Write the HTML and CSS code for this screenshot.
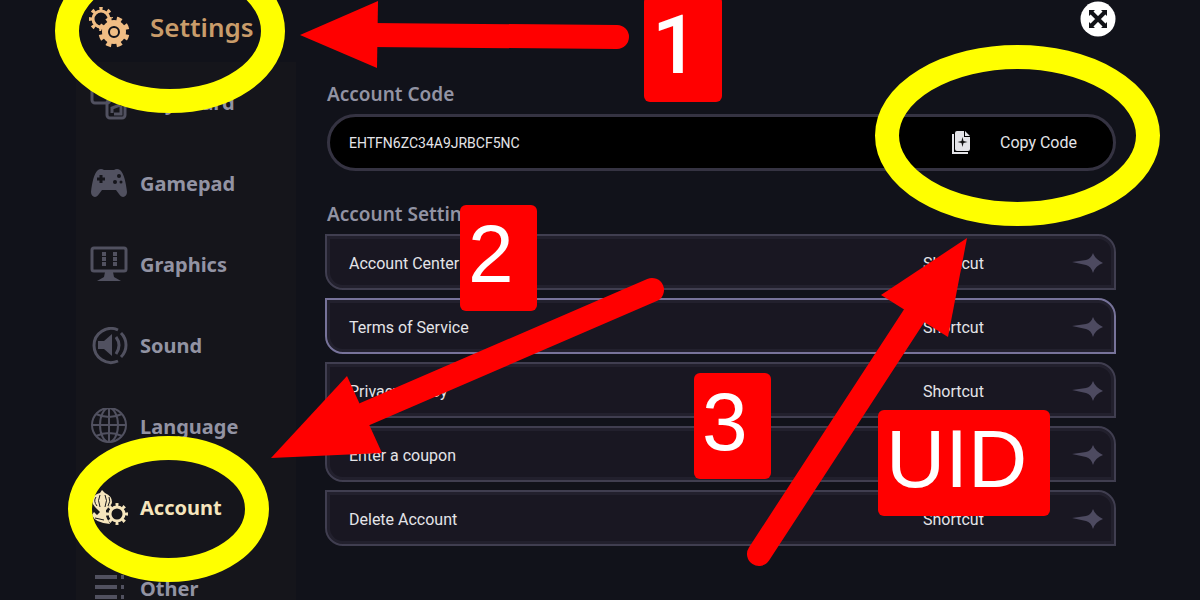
FILE: index.html
```
<!DOCTYPE html>
<html lang="en">
<head>
  <meta charset="UTF-8" />
  <meta name="viewport" content="width=device-width, initial-scale=1" />
  <title>Settings - Account</title>
  <link rel="stylesheet" href="styles.css">
</head>
<body>
  <div class="screen">
    <aside class="sidebar">
      <h1 class="title">
        <svg class="title-icon" viewBox="0 0 42 42">
          <mask id="back-gear"><path fill="#fff" d="M0 0h30v10L14 16l-1 12H0z" /></mask>
          <g fill="none" stroke="currentColor">
            <g mask="url(#back-gear)">
              <circle cx="13" cy="13" r="8" stroke-width="3" />
              <circle cx="13" cy="13" r="10" stroke-width="5" pathLength="32" stroke-dasharray="1.600 2.400" stroke-dashoffset="0.800" />
            </g>
            <circle cx="26" cy="26" r="9" stroke-width="6" />
            <circle cx="26" cy="26" r="13" stroke-width="5" pathLength="32" stroke-dasharray="2 2" stroke-dashoffset="1" transform="rotate(22.500 26 26)" />
          </g>
          <circle cx="26" cy="26" r="4" fill="currentColor" />
        </svg>
        Settings
      </h1>
      <nav class="menu">
        <a class="menu-item" href="#keyboard">
          <svg class="menu-icon" viewBox="0 0 38 38" fill="none" stroke="currentColor" stroke-width="3">
            <rect x="2" y="1" width="18" height="18" rx="3" />
            <rect x="17" y="16" width="18" height="18" rx="3" />
            <path d="M22 29V24l8-3M31 22v8h-7" />
          </svg>
          Keyboard
        </a>
        <a class="menu-item" href="#gamepad">
          <svg class="menu-icon" viewBox="0 0 38 38">
            <path fill="currentColor" d="M8 5q3-2 6 0h10q3-2 6 0c4 3 6 13 7 22 0 5-5 7-8 2l-3-4H12l-3 4c-3 5-8 3-8-2C2 18 4 8 8 5z" />
            <path stroke="#15151b" stroke-width="3" d="M7 14h8M11 10v8" />
            <g fill="#15151b"><circle cx="29" cy="11" r="2" /><circle cx="25" cy="17" r="2" /><circle cx="31" cy="17" r="1.500" /></g>
          </svg>
          Gamepad
        </a>
        <a class="menu-item" href="#graphics">
          <svg class="menu-icon" viewBox="0 0 38 38">
            <rect x="2" y="2" width="34" height="23" rx="2" fill="none" stroke="currentColor" stroke-width="3" />
            <path fill="currentColor" d="M15 26h8l1 5 7 4H7l7-4z" />
            <path stroke="currentColor" stroke-width="4" stroke-dasharray="4 1" d="M14 6v14M25 6v14" />
          </svg>
          Graphics
        </a>
        <a class="menu-item" href="#sound">
          <svg class="menu-icon" viewBox="0 0 38 38" fill="none" stroke="currentColor" stroke-width="3">
            <path d="M28 3a17 17 0 1 0 0 31M31 6q5 5 5 12t-5 12M26 10q6 8 0 17" />
            <path fill="currentColor" stroke="none" d="M8 14h6l8-7v22l-8-7H8z" />
          </svg>
          Sound
        </a>
        <a class="menu-item" href="#language">
          <svg class="menu-icon" viewBox="0 0 38 38" fill="none" stroke="currentColor" stroke-width="2">
            <circle cx="19" cy="17" r="17" />
            <ellipse cx="19" cy="17" rx="9" ry="17" />
            <path d="M19 0v34M2 17h34M6 6q13 6 26 0M6 28q13-6 26 0" />
          </svg>
          Language
        </a>
        <a class="menu-item active" href="#account" aria-current="page">
          <svg class="menu-icon" viewBox="0 0 38 38">
            <path fill="currentColor" d="M12 1l3 3q7 3 7 9 0 3-3 6l-3 2v5l4 9Q5 34 2 26l2-3 3 3 3-3-5-5q-4-4-2-9 2-4 7-5z" />
            <path fill="none" stroke="#15151b" d="M10 6q-3 5 0 12M15 6q3 5 0 12M6 8q-3 4 1 9M19 8q2 4-1 9M5 29l9 2" />
            <circle cx="27" cy="25" r="11" fill="#15151b" />
            <g fill="none" stroke="currentColor">
              <circle cx="27" cy="25" r="7" stroke-width="3" />
              <circle cx="27" cy="25" r="9" stroke-width="4" pathLength="32" stroke-dasharray="1.600 2.400" stroke-dashoffset="0.800" />
            </g>
          </svg>
          Account
        </a>
        <a class="menu-item" href="#other">
          <svg class="menu-icon" viewBox="0 0 38 38" stroke="currentColor" stroke-width="4">
            <path d="M5 7h22M31 7h3M5 17h22M31 17h3M5 27h22M31 27h3" />
          </svg>
          Other
        </a>
      </nav>
    </aside>

    <main class="content">
      <div class="top">
        <button class="close" aria-label="Close">
          <svg viewBox="0 0 36 36">
            <circle cx="18" cy="18" r="17.500" fill="#fff" />
            <path stroke="#111217" stroke-width="4" d="M11 11l14 14M25 11L11 25" />
            <path fill="#111217" d="M9 9h6l-6 6zM27 9h-6l6 6zM9 27h6l-6-6zM27 27h-6l6-6z" />
          </svg>
        </button>
      </div>

      <h2><label for="account-code">Account Code</label></h2>
      <div class="code-box">
        <input id="account-code" type="text" value="EHTFN6ZC34A9JRBCF5NC" readonly>
        <button class="copy">
          <svg class="copy-icon" viewBox="0 0 18 24">
            <path fill="none" stroke="currentColor" stroke-width="2" d="M1 3v19h15" />
            <path fill="currentColor" d="M5 0h7v6h6v12q0 2-2 2H5q-2 0-2-2V2q0-2 2-2zM13 0l5 5h-5z" />
            <path fill="#111" d="M10.500 6l1 4 4 1-4 1-1 4-1-4-4-1 4-1z" />
          </svg>
          Copy Code
        </button>
      </div>

      <h2>Account Settings</h2>
      <div class="rows">
        <a class="row" href="#center"><span>Account Center</span><span>Shortcut</span><svg class="star" viewBox="0 0 32 20"><use href="#spark" /></svg></a>
        <a class="row selected" href="#terms"><span>Terms of Service</span><span>Shortcut</span><svg class="star" viewBox="0 0 32 20"><use href="#spark" /></svg></a>
        <a class="row" href="#privacy"><span>Privacy Policy</span><span>Shortcut</span><svg class="star" viewBox="0 0 32 20"><use href="#spark" /></svg></a>
        <a class="row" href="#coupon"><span>Enter a coupon</span><span>Shortcut</span><svg class="star" viewBox="0 0 32 20"><use href="#spark" /></svg></a>
        <a class="row" href="#delete"><span>Delete Account</span><span>Shortcut</span><svg class="star" viewBox="0 0 32 20"><use href="#spark" /></svg></a>
      </div>
    </main>

    <!-- guide marks on top of the settings screen -->
    <svg class="marks" viewBox="0 0 1200 600">
      <defs><path id="spark" d="M0 9l14-2q5-1 7-7 2 6 10 10-8 3-10 10-2-7-7-8z" /></defs>
      <g class="ring">
        <ellipse cx="170" cy="31" rx="103" ry="70" />
        <ellipse cx="168.500" cy="509" rx="88.500" ry="61" />
        <ellipse cx="1017.500" cy="135.500" rx="130.500" ry="78.500" />
      </g>
      <g class="arrow">
        <path d="M370 35L617 37" /><path class="head" d="M300 35L378 1 377 68z" />
        <path d="M365 414L652 290" /><path class="head" d="M271 458L347 376 382 453z" />
        <path d="M914 316L759 554" /><path class="head" d="M967 238L881 295 948 337z" />
      </g>
    </svg>
    <span class="tag tag-1">1</span>
    <span class="tag tag-2">2</span>
    <span class="tag tag-3">3</span>
    <span class="tag tag-uid">UID</span>
  </div>
</body>
</html>
```
FILE: styles.css
```
* { box-sizing: border-box; }
body {
  margin: 0;
  background: #11121a;
  color: #e4e4e8;
  font-family: "Roboto", sans-serif;
  font-size: 16px;
}
a { color: inherit; text-decoration: none; }
button {
  padding: 0;
  border: 0;
  background: none;
  color: inherit;
  font: inherit;
  cursor: pointer;
}
.screen {
  position: relative;
  display: flex;
  height: 100vh;
  padding: 0 84px 0 76px;
  overflow: hidden;
}

/* left menu */
.sidebar {
  flex: 0 0 220px;
  background: #15151b;
  font-family: "Noto Sans", sans-serif;
}
.title {
  display: flex;
  align-items: center;
  gap: 20px;
  height: 62px;
  margin: 0;
  padding: 0 0 8px 12px;
  background: #11121a;
  color: #c99c6a;
  font-size: 26px;
  font-weight: 600;
}
.title-icon { width: 42px; height: 42px; color: #f0bd84; }
.menu-item {
  display: flex;
  align-items: center;
  gap: 12px;
  height: 81px;
  padding-left: 14px;
  color: #9293a3;
  font-size: 20px;
  font-weight: 700;
}
.menu-icon { width: 38px; height: 38px; color: #515160; }
.menu-item.active, .active .menu-icon { color: #f5e5bd; }

/* account page */
.content { flex: 1; padding-left: 29px; }
.top { display: flex; justify-content: flex-end; height: 80px; }
.close { width: 36px; height: 36px; margin-top: 1px; }
.close svg { display: block; }
h2 {
  margin: 0 0 6px 2px;
  color: #9293a3;
  font-family: "Noto Sans", sans-serif;
  font-size: 19px;
  font-weight: 600;
  line-height: 28px;
}
.code-box {
  display: flex;
  align-items: center;
  height: 57px;
  margin: 0 0 29px 2px;
  padding: 0 36px 0 19px;
  border: 3px solid #353342;
  border-radius: 30px;
  background: #000;
}
.code-box input {
  flex: 1;
  min-width: 0;
  padding: 0;
  border: 0;
  outline: 0;
  background: none;
  color: #e4e4e8;
  font-family: inherit;
  font-size: 14px;
}
.copy { display: flex; align-items: center; gap: 30px; }
.copy-icon { width: 18px; height: 24px; }
.rows { display: grid; gap: 8px; }
.row {
  display: grid;
  grid-template-columns: 1fr 149px 32px;
  align-items: center;
  height: 56px;
  padding: 2px 10px 0 22px;
  border: 2px solid #403e50;
  border-radius: 0 18px 0 18px;
  background: #191722;
  box-shadow: inset 0 0 0 3px #22202d;
}
.row.selected { border-color: #77739a; }
.star { width: 32px; height: 20px; fill: #4d4a60; }

/* guide marks */
.marks {
  position: absolute;
  top: 0;
  left: 0;
  width: 1200px;
  height: 600px;
  pointer-events: none;
}
.ring { fill: none; stroke: #ff0; stroke-width: 24; }
.arrow { stroke: #f00; stroke-width: 24; stroke-linecap: round; }
.arrow .head { fill: #f00; stroke: none; }
.tag {
  position: absolute;
  padding: 3px 23px 11px 8px;
  border-radius: 6px;
  background: #f00;
  color: #fff;
  font-family: "Liberation Sans", Arial, sans-serif;
  font-size: 82px;
  line-height: 92px;
}
.tag-1 {
  left: 644px;
  top: -4px;
  font-family: "Roboto", sans-serif;
  font-weight: 500;
}
.tag-2 { left: 460px; top: 205px; }
.tag-3 { left: 694px; top: 373px; }
.tag-uid { left: 878px; top: 410px; }
```
